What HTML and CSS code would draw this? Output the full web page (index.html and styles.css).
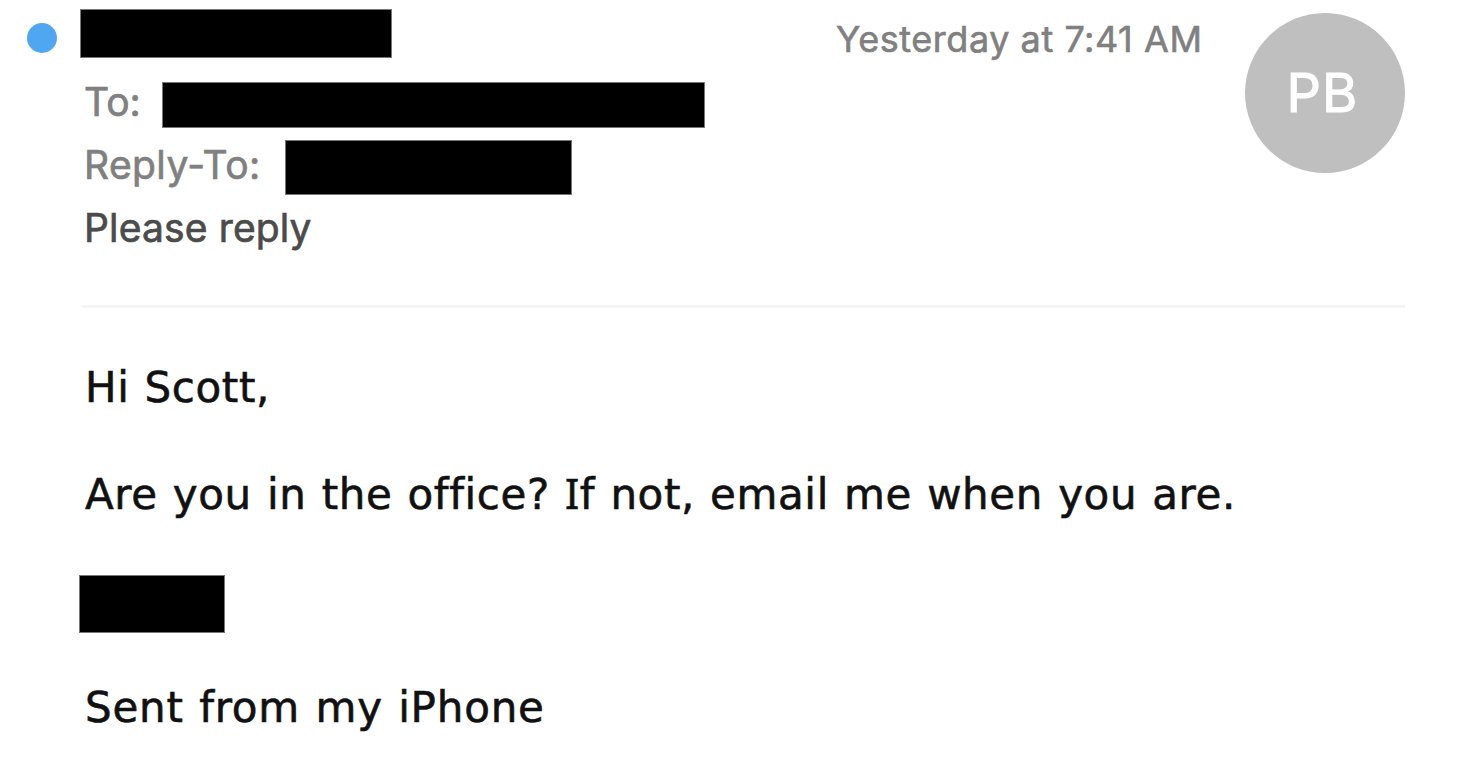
FILE: index.html
```html
<!DOCTYPE html>
<html lang="en">
<head>
<meta charset="utf-8">
<title>Please reply</title>
<link rel="stylesheet" href="styles.css">
</head>
<body>
<main class="mail">
  <header class="header">
    <span class="unread"></span>
    <div class="meta">
      <div class="sender"><span class="redacted redacted-sender"></span></div>
      <div class="row row-to"><span class="label label-to">To:</span><span class="redacted redacted-to"></span></div>
      <div class="row row-reply"><span class="label label-reply">Reply-To:</span><span class="redacted redacted-reply"></span></div>
      <div class="row row-subject"><span class="label subject">Please reply</span></div>
    </div>
    <time class="date">Yesterday at 7:41 AM</time>
    <div class="avatar"><span class="initials">PB</span></div>
  </header>
  <article class="body">
    <p class="line greeting">Hi Scott,</p>
    <p class="line question">Are you in the office? <span class="serif-i">I</span>f not, email me when you are.</p>
    <span class="redacted redacted-name"></span>
    <p class="line signature">Sent from my iPhone</p>
  </article>
</main>
</body>
</html>
```
FILE: styles.css
```css
* { box-sizing: border-box; }
body { margin: 0; background: #fff; }
.mail { width: 1466px; height: 776px; overflow: hidden; padding-left: 27px; }
.header { display: flex; align-items: flex-start; height: 305px; font-family: Inter, sans-serif; color: #808080; white-space: nowrap; }
.unread { width: 30px; height: 30px; margin-top: 23px; border-radius: 50%; background: #4ea7f0; flex: none; }
.meta { width: 753px; padding: 9px 0 0 23px; flex: none; }
.redacted { display: block; background: #000; border: 1px solid #777; flex: none; }
.redacted-sender { width: 312px; height: 49px; }
.row { display: flex; align-items: flex-start; }
.label { display: block; font-size: 39px; line-height: 48px; -webkit-text-stroke: 0.7px; }
.row-to { margin-top: 24px; height: 46px; }
.label-to { width: 78px; margin: -4px 0 0 4px; }
.redacted-to { width: 543px; height: 46px; }
.row-reply { margin-top: 12px; height: 55px; }
.label-reply { width: 201px; margin: 1px 0 0 4px; letter-spacing: 0.4px; }
.redacted-reply { width: 287px; height: 55px; }
.row-subject { margin: 9px 0 0 4px; }
.subject { color: #4b4b4b; letter-spacing: 0.15px; }
.date { width: 390px; margin: 17px 0 0 26px; font-size: 36px; line-height: 44px; letter-spacing: 0.55px; -webkit-text-stroke: 0.6px; flex: none; }
.avatar { width: 160px; height: 160px; margin: 13px 0 0 19px; padding: 0 5px 2px 0; border-radius: 50%; background: #bfbfbf; color: #fff; display: flex; align-items: center; justify-content: center; flex: none; }
.initials { font-size: 54px; letter-spacing: 1px; -webkit-text-stroke: 1px; }
.body { margin-left: 55px; width: 1323px; border-top: 3px solid #f5f5f5; padding: 53px 0 0 3px; font-family: "DejaVu Sans", sans-serif; color: #111; white-space: nowrap; }
.line { margin: 0; font-size: 42px; line-height: 54px; letter-spacing: 0.6px; word-spacing: 1.2px; -webkit-text-stroke: 0.6px; }
/* Capital I with crossbars */
.serif-i { font-family: "Noto Sans", sans-serif; line-height: 1; }
.question { margin-top: 53px; }
.redacted-name { width: 146px; height: 58px; margin: 53px 0 0 -6px; }
.signature { margin-top: 48px; letter-spacing: 0.8px; }
```
